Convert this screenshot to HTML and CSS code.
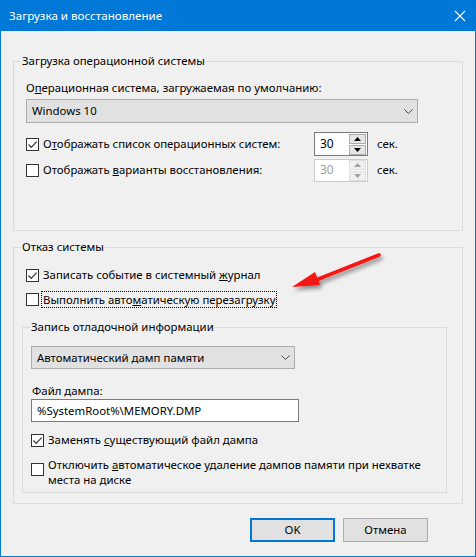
FILE: index.html
```html
<!DOCTYPE html>
<html lang="ru">
<head>
<meta charset="utf-8">
<title>Загрузка и восстановление</title>
<link rel="stylesheet" href="styles.css">
</head>
<body>
<div class="window">
  <div class="titlebar">
    <span class="title">Загрузка и восстановление</span>
    <svg class="close" width="12" height="12" viewBox="0 0 12 12"><path d="M1 1 L11 11 M11 1 L1 11" stroke="#fff" stroke-width="1.1" fill="none"/></svg>
  </div>
  <div class="content">
    <section class="group g1">
      <div class="group-title">Загрузка операционной системы</div>
      <div class="label">О<u>п</u>ерационная система, загружаемая по умолчанию:</div>
      <div class="combo combo-os">
        <span>Windows 10</span>
        <svg class="chev" width="9" height="5" viewBox="0 0 9 5"><path d="M0.5 0.5 L4.5 4.5 L8.5 0.5" stroke="#444" stroke-width="1" fill="none"/></svg>
      </div>
      <div class="timer-row first">
        <div class="check">
          <span class="box"><svg width="11" height="11" viewBox="0 0 11 11"><path d="M1.5 5.5 L4.2 8.3 L9.6 2.6" stroke="#333" stroke-width="1.2" fill="none"/></svg></span>
          <span class="text">О<u>т</u>ображать список операционных систем:</span>
        </div>
        <div class="spin">
          <span class="spin-val">30</span>
          <span class="spin-btns">
            <span class="sb"><svg width="7" height="4" viewBox="0 0 7 4"><path d="M0 4 L3.5 0 L7 4 Z" fill="#000"/></svg></span>
            <span class="sb"><svg width="7" height="4" viewBox="0 0 7 4"><path d="M0 0 L3.5 4 L7 0 Z" fill="#000"/></svg></span>
          </span>
        </div>
        <span class="unit">сек.</span>
      </div>
      <div class="timer-row second">
        <div class="check">
          <span class="box"></span>
          <span class="text">Отображать <u>в</u>арианты восстановления:</span>
        </div>
        <div class="spin disabled">
          <span class="spin-val">30</span>
          <span class="spin-btns">
            <span class="sb"><svg width="7" height="4" viewBox="0 0 7 4"><path d="M0 4 L3.5 0 L7 4 Z" fill="#a0a0a0"/></svg></span>
            <span class="sb"><svg width="7" height="4" viewBox="0 0 7 4"><path d="M0 0 L3.5 4 L7 0 Z" fill="#a0a0a0"/></svg></span>
          </span>
        </div>
        <span class="unit">сек.</span>
      </div>
    </section>

    <section class="group g2">
      <div class="group-title">Отказ системы</div>
      <div class="check row-log">
        <span class="box"><svg width="11" height="11" viewBox="0 0 11 11"><path d="M1.5 5.5 L4.2 8.3 L9.6 2.6" stroke="#333" stroke-width="1.2" fill="none"/></svg></span>
        <span class="text">Записать событие в системный <u>ж</u>урнал</span>
      </div>
      <div class="check row-reboot">
        <span class="box"></span>
        <span class="text focus">Выполнить авто<u>м</u>атическую перезагрузку</span>
      </div>

      <section class="group g3">
        <div class="group-title">Запись отладочной информации</div>
        <div class="combo combo-dump">
          <span>Автоматический дамп памяти</span>
          <svg class="chev" width="9" height="5" viewBox="0 0 9 5"><path d="M0.5 0.5 L4.5 4.5 L8.5 0.5" stroke="#444" stroke-width="1" fill="none"/></svg>
        </div>
        <div class="label file-label">Файл дампа:</div>
        <div class="textbox">%SystemRoot%\MEMORY.DMP</div>
        <div class="check row-replace">
          <span class="box"><svg width="11" height="11" viewBox="0 0 11 11"><path d="M1.5 5.5 L4.2 8.3 L9.6 2.6" stroke="#333" stroke-width="1.2" fill="none"/></svg></span>
          <span class="text">Заменять <u>с</u>уществующий файл дампа</span>
        </div>
        <div class="check row-disable">
          <span class="box"></span>
          <span class="text">Отключить <u>а</u>втоматическое удаление дампов памяти при нехватке<br>места на диске</span>
        </div>
      </section>
    </section>

    <div class="buttons">
      <button class="btn default">OK</button>
      <button class="btn">Отмена</button>
    </div>
  </div>

  <svg class="arrow" width="120" height="60" viewBox="0 0 120 60">
    <defs>
      <filter id="sh" x="-30%" y="-50%" width="160%" height="200%">
        <feDropShadow dx="2" dy="3" stdDeviation="2.2" flood-color="#000" flood-opacity="0.45"/>
      </filter>
    </defs>
    <g filter="url(#sh)">
      <path d="M90 8 L27 33" stroke="#f51616" stroke-width="3.6" stroke-linecap="round" fill="none"/>
      <path d="M3 40 L26 25 L31 38 Z" fill="#f51616"/>
    </g>
  </svg>
</div>
</body>
</html>
```

FILE: styles.css
```css
* { box-sizing: border-box; }

html, body {
  margin: 0;
  padding: 0;
  background: #f0f0f0;
}

body {
  font-family: "Noto Sans", "Open Sans", sans-serif;
  font-size: 11.4px;
  line-height: 16px;
  color: #000;
}

u { text-decoration: underline; text-underline-offset: 1px; }

.window {
  position: relative;
  width: 476px;
  height: 557px;
  background: #f0f0f0;
  border: 1px solid #0078d7;
  border-top: 0;
}

.titlebar {
  height: 31px;
  background: #0078d7;
  color: #fff;
  display: flex;
  align-items: center;
  justify-content: space-between;
  padding: 0 9px 0 8px;
}

.title {
  font-size: 11.6px;
}

.close { display: block; }

.content {
  padding: 30px 12px 0 12px;
}

.group {
  position: relative;
  border: 1px solid #dcdcdc;
}

.group-title {
  position: absolute;
  top: -9px;
  left: 7px;
  padding: 0 1px;
  background: #f0f0f0;
  line-height: 16px;
  white-space: nowrap;
}

.g1 {
  padding: 18px 12px 48px 12px;
}

.label { line-height: 16px; white-space: nowrap; }

.combo {
  height: 24px;
  background: #e1e1e1;
  border: 1px solid #adadad;
  display: flex;
  align-items: center;
  justify-content: space-between;
  padding: 0 4px 0 5px;
}

.combo-os {
  margin-top: 3px;
  width: 392px;
}

.chev { display: block; }

.timer-row {
  display: grid;
  grid-template-columns: 288px 54px auto;
  align-items: center;
  height: 24px;
}

.timer-row.first { margin-top: 9px; }
.timer-row.second { margin-top: 2px; }

.check {
  display: flex;
  align-items: center;
}

.box {
  width: 13px;
  height: 13px;
  flex: none;
  border: 1px solid #333;
  background: #fff;
  display: flex;
  align-items: center;
  justify-content: center;
}

.box svg { display: block; }

.check .text {
  margin-left: 4px;
  line-height: 16px;
  white-space: nowrap;
}

.spin {
  height: 24px;
  border: 1px solid #7a7a7a;
  background: #fff;
  display: flex;
  align-items: center;
  justify-content: space-between;
  padding: 0 1px 0 5px;
}

.spin-val { font-size: 12px; }

.spin.disabled {
  height: 23px;
  border-color: #cccccc;
  color: #a0a0a0;
}

.spin-btns {
  display: flex;
  flex-direction: column;
  gap: 1px;
}

.sb {
  width: 17px;
  height: 10px;
  background: #e5e5e5;
  border: 1px solid #adadad;
  display: flex;
  align-items: center;
  justify-content: center;
}

.disabled .sb {
  background: #f0f0f0;
  border-color: #dedede;
}

.sb svg { display: block; }

.unit { margin-left: 9px; }

.g2 {
  margin-top: 16px;
  padding: 19px 15px 10px 8px;
}

.row-log {
  margin-left: 4px;
  height: 16px;
}

.row-reboot {
  margin-left: 4px;
  margin-top: 8px;
  height: 17px;
}

.check .text.focus {
  margin-left: 2px;
  border: 1px dotted #000;
  padding: 0 1px;
  line-height: 15px;
}

.g3 {
  margin-top: 19px;
  padding: 18px 8px 5px 8px;
}

.combo-dump {
  width: 264px;
  height: 23px;
}

.file-label {
  margin-top: 14px;
  padding-left: 1px;
}

.textbox {
  width: 268px;
  height: 23px;
  border: 1px solid #7a7a7a;
  background: #fff;
  padding: 0 5px;
  line-height: 21px;
  white-space: nowrap;
}

.row-replace {
  margin-top: 10px;
  height: 16px;
}

.row-disable {
  margin-top: 9px;
  align-items: flex-start;
}

.row-disable .box { margin-top: 6px; }

.row-disable .text { line-height: 15px; }

.buttons {
  display: flex;
  justify-content: flex-end;
  gap: 8px;
  margin-top: 14px;
  margin-right: 35px;
}

.btn {
  width: 85px;
  height: 24px;
  font: inherit;
  color: #000;
  background: #e1e1e1;
  border: 1px solid #adadad;
  padding: 0;
}

.btn.default {
  border: 2px solid #0078d7;
}

.arrow {
  position: absolute;
  left: 288px;
  top: 247px;
}
```
